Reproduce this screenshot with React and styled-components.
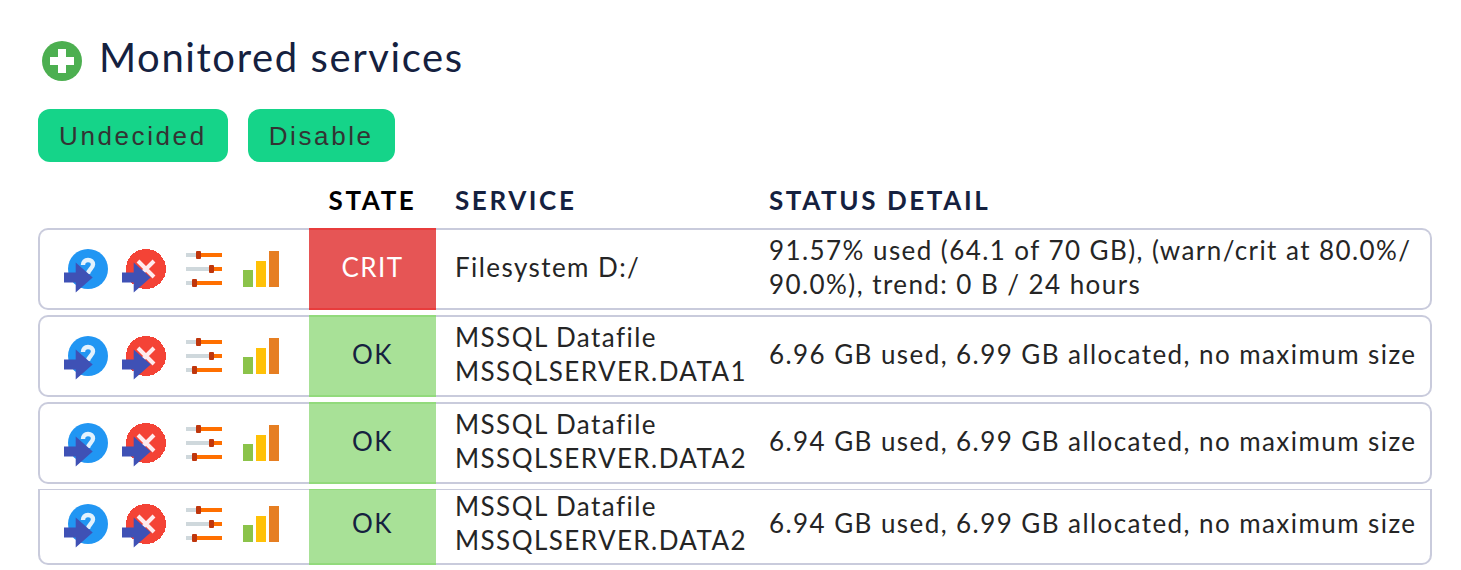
import React from "react";
import styled, { createGlobalStyle } from "styled-components";

const GlobalStyle = createGlobalStyle`
  *, *::before, *::after { box-sizing: border-box; }
  body {
    margin: 0;
    background: #fff;
    color: #252525;
    font-family: Lato, "Liberation Sans", sans-serif;
    font-size: 26px;
    line-height: 34px;
  }
`;

const Page = styled.main`
  padding: 34px 29px 5px 38px;
`;

const Heading = styled.header`
  display: flex;
  align-items: center;
  gap: 17px;
  padding: 0 4px;
  height: 53px;
`;

const Title = styled.h1`
  margin: 0;
  padding-bottom: 8px;
  color: #15213f;
  font-size: 40px;
  font-weight: 400;
  line-height: 46px;
  letter-spacing: 0.04em;
`;

const Toolbar = styled.div`
  display: flex;
  gap: 20px;
  margin-top: 22px;
`;

const ActionButton = styled.button`
  height: 53px;
  padding: 2px 21px 0;
  border: 0;
  border-radius: 12px;
  background: #15d489;
  color: #333;
  font-family: "Liberation Sans", sans-serif;
  font-size: 26px;
  letter-spacing: 0.1em;
  cursor: pointer;
`;

const ServiceTable = styled.table`
  width: 100%;
  margin-top: 10px;
  border-collapse: separate;
  border-spacing: 0 5px;
  table-layout: fixed;
  letter-spacing: 0.055em;
`;

const Column = styled.col`
  width: ${({ $width }) => $width};
`;

const HeadCell = styled.th`
  height: 46px;
  padding: 0 0 0 ${({ $center }) => ($center ? 0 : "19px")};
  color: ${({ $center }) => ($center ? "#000" : "#15213f")};
  font-weight: 700;
  letter-spacing: 0.1em;
  text-align: ${({ $center }) => ($center ? "center" : "left")};
  text-transform: uppercase;
`;

const Cell = styled.td`
  --edge: #c9cbdc;
  padding: 3px 0 7px 19px;
  border: solid var(--edge);
  border-width: 2px 0;
  vertical-align: middle;

  &:last-child {
    border-right-width: 2px;
    border-radius: 0 10px 10px 0;
  }
`;

const ActionsCell = styled(Cell)`
  padding: 5px 0 5px 24px;
  border-left-width: 2px;
  border-radius: 10px 0 0 10px;
`;

const states = {
  CRIT: { background: "#e65555", border: "#e83c3c", color: "#fff" },
  OK: { background: "#a8e197", border: "#92da7c", color: "#15213f" },
};

const StateCell = styled(Cell)`
  --edge: ${({ $state }) => states[$state].border};
  padding-left: 0;
  background: ${({ $state }) => states[$state].background};
  color: ${({ $state }) => states[$state].color};
  text-align: center;
`;

const Row = styled.tr`
  &:last-child > ${Cell} {
    padding-top: 0;
    padding-bottom: 6px;
    border-top-width: 0;
    border-top-left-radius: 0;
    border-top-right-radius: 0;
    box-shadow: inset 0 1px var(--edge);
  }

  &:last-child > ${ActionsCell}${Cell} {
    padding-bottom: 4px;
  }
`;

const Actions = styled.div`
  display: flex;
  gap: 10px;
`;

const IconButton = styled.button`
  display: block;
  width: 48px;
  height: 48px;
  padding: 0;
  border: 0;
  background: none;
  cursor: pointer;
`;

const Icon = styled.svg`
  display: block;
  flex: none;
  overflow: visible;
`;

const AddIcon = () => (
  <Icon width="40" height="40" viewBox="0 0 40 40" aria-hidden="true">
    <circle cx="20" cy="20" r="20" fill="#4caf50" />
    <path d="M16 8h8v8h8v8h-8v8h-8v-8H8v-8h8z" fill="#fff" />
  </Icon>
);

const Arrow = () => (
  <path d="M0 27.500H11.700V17.500L28.700 32.500L11.700 47.500V37.500H0z" fill="#3f51b5" />
);

const UndecidedIcon = () => (
  <Icon width="48" height="48" viewBox="0 0 48 48" aria-hidden="true">
    <circle cx="24" cy="24" r="20" fill="#2196f3" />
    <path
      d="M19 20c0-3.300 2-5 5-5s5 1.700 5 4.600c0 4-5 5-5 9.400"
      fill="none"
      stroke="#e3f2fd"
      strokeWidth="4.400"
    />
    <Arrow />
  </Icon>
);

const DisableIcon = () => (
  <Icon width="48" height="48" viewBox="0 0 48 48" aria-hidden="true">
    <circle cx="24" cy="24" r="20" fill="#f44336" shapeRendering="crispEdges" />
    <path d="M16 16l16 16M32 16L16 32" stroke="#ffebee" strokeWidth="4" />
    <Arrow />
  </Icon>
);

const ParametersIcon = () => (
  <Icon width="48" height="48" viewBox="0 0 48 48" aria-hidden="true">
    <path d="M6 8h12v4H6zM6 22h25v4H6zM6 36h8v4H6z" fill="#cfd8dc" />
    <path d="M18 8h24v4H18zM31 22h11v4H31zM14 36h28v4H14z" fill="#ff6f00" />
    <g fill="#bf360c">
      <rect x="16" y="6" width="5" height="8" rx="1" />
      <rect x="29" y="20" width="5" height="8" rx="1" />
      <rect x="12" y="34" width="5" height="8" rx="1" />
    </g>
  </Icon>
);

const GraphIcon = () => (
  <Icon width="48" height="48" viewBox="0 0 48 48" aria-hidden="true">
    <path d="M5 25h10v17H5z" fill="#8bc34a" />
    <path d="M18 16h10v26H18z" fill="#ffc107" />
    <path d="M31 6h10v36H31z" fill="#e67e22" />
  </Icon>
);

const rowActions = [
  { label: "Move to undecided", Glyph: UndecidedIcon },
  { label: "Move to disabled", Glyph: DisableIcon },
  { label: "Edit parameters", Glyph: ParametersIcon },
  { label: "Show graphs", Glyph: GraphIcon },
];

const services = [
  {
    state: "CRIT",
    name: "Filesystem D:/",
    detail: (
      <>
        91.57% used (64.1 of 70 GB), (warn/crit at 80.0%/
        <wbr />
        90.0%), trend: 0 B / 24 hours
      </>
    ),
  },
  {
    state: "OK",
    name: "MSSQL Datafile MSSQLSERVER.DATA1",
    detail: "6.96 GB used, 6.99 GB allocated, no maximum size",
  },
  {
    state: "OK",
    name: "MSSQL Datafile MSSQLSERVER.DATA2",
    detail: "6.94 GB used, 6.99 GB allocated, no maximum size",
  },
  {
    state: "OK",
    name: "MSSQL Datafile MSSQLSERVER.DATA2",
    detail: "6.94 GB used, 6.99 GB allocated, no maximum size",
  },
];

export default function App() {
  return (
    <>
      <GlobalStyle />
      <Page>
        <Heading>
          <AddIcon />
          <Title>Monitored services</Title>
        </Heading>
        <Toolbar>
          <ActionButton type="button">Undecided</ActionButton>
          <ActionButton type="button">Disable</ActionButton>
        </Toolbar>
        <ServiceTable>
          <colgroup>
            <Column $width="271px" />
            <Column $width="127px" />
            <Column $width="314px" />
            <Column $width="auto" />
          </colgroup>
          <thead>
            <tr>
              <HeadCell aria-label="Actions" />
              <HeadCell scope="col" $center>State</HeadCell>
              <HeadCell scope="col">Service</HeadCell>
              <HeadCell scope="col">Status detail</HeadCell>
            </tr>
          </thead>
          <tbody>
            {services.map(({ state, name, detail }, index) => (
              <Row key={index}>
                <ActionsCell>
                  <Actions>
                    {rowActions.map(({ label, Glyph }) => (
                      <IconButton key={label} type="button" aria-label={label}>
                        <Glyph />
                      </IconButton>
                    ))}
                  </Actions>
                </ActionsCell>
                <StateCell $state={state}>{state}</StateCell>
                <Cell>{name}</Cell>
                <Cell>{detail}</Cell>
              </Row>
            ))}
          </tbody>
        </ServiceTable>
      </Page>
    </>
  );
}
